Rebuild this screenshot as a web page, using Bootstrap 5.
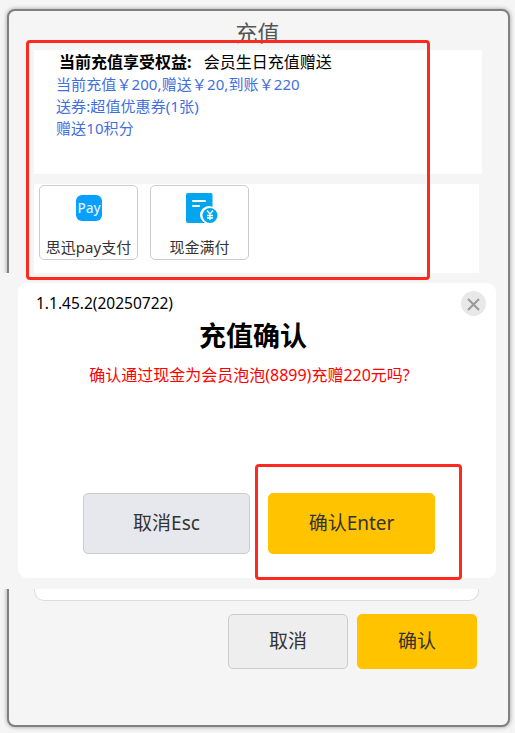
<!DOCTYPE html>
<html lang="zh-CN">
<head>
<meta charset="utf-8">
<title>充值</title>
<link href="https://cdn.jsdelivr.net/npm/bootstrap@5.3.0/dist/css/bootstrap.min.css" rel="stylesheet">
<style>
html,body{margin:0;height:733px;overflow:hidden;background:#f5f5f5;font-family:"Noto Sans","Noto Sans CJK SC",sans-serif}
.stage{position:relative;width:515px;height:733px;padding:9px 5px 6px 7px}
.win{height:718px;background:#f5f5f6;border:2px solid #808080;border-radius:8px;box-shadow:0 0 4px #999;padding:0 25px}
.win-title{font-family:"Noto Sans CJK SC",serif;font-size:22px;line-height:26px;color:#555;text-align:center;padding-top:7px;height:39px;margin-right:2px}
.benefit{height:124px;width:448px;background:#fff;padding:1px 0 0 22px}
.b-head{font-size:16px;line-height:22px;color:#000;margin-left:3px}
.b-head strong{margin-right:8px}
.b-line{font-size:15px;line-height:22px;color:#3f6fe0;letter-spacing:.1px}
.pay-top{margin-top:10px;width:445px;height:89px;background:#fff;padding:1px 0 0 5px}
.pay-rest{width:445px;height:328px;background:#fff;border:1px solid #ddd;border-top:0;border-radius:0 0 10px 10px}
.pay-item{width:99px;height:75px;border:1px solid #ccc;border-radius:5px;background:#fff;color:#333;font-size:15px;line-height:20px;padding:0}
.pay-ico{height:44px}
.pay-name{margin-top:7px;padding-bottom:2px;white-space:nowrap}
.foot-btn{width:120px;height:55px;border-radius:5px;font-size:19px;color:#333;padding:0}
.btn-off{background:#eeeeee;border:1px solid #ccc}
.btn-on{background:#ffc300;border:1px solid #ffc300}
.foot-row{margin-top:13px;width:443px;gap:9px}
.veil{position:absolute;left:0;top:273px;width:507px;height:316px;background:#f5f5f6;padding:10px 11px 10px 18px}
.dlg{position:relative;width:478px;height:295px;background:#fff;border-radius:9px;padding:10px 0 0 18px}
.ver{font-size:15.5px;line-height:20px;color:#000}
.dlg-title{font-size:27px;line-height:34px;font-weight:700;color:#000;text-align:center;margin:6px 0 0 -18px;width:470px}
.dlg-msg{font-size:16px;line-height:22px;color:#f00;text-align:center;margin:11px 0 0 -18px;width:463px}
.x-btn{position:absolute;right:10px;top:8px;width:25px;height:25px;border-radius:50%;background:#e8e8e8;border:0;padding:0}
.dlg-btns{position:absolute;left:65px;top:210px}
.dlg-btn{width:167px;height:61px;border-radius:5px;font-size:19px;color:#333;padding:0}
.dlg-cancel{background:#e6e8ed;border:1px solid #ccc}
.dlg-gap{gap:18px}
.mark-a,.mark-b{position:absolute;border:3px solid #ff2a1f;border-radius:4px}
.mark-a{left:26px;top:40px;width:404px;height:240px}
.mark-b{left:255px;top:464px;width:207px;height:116px}
</style>
</head>
<body>
<div class="stage">
  <div class="win">
    <div class="win-title">充值</div>
    <div class="benefit">
      <div class="b-head"><strong>当前充值享受权益:</strong> 会员生日充值赠送</div>
      <div class="b-line">当前充值￥200,赠送￥20,到账￥220</div>
      <div class="b-line">送券:超值优惠券(1张)</div>
      <div class="b-line">赠送10积分</div>
    </div>
    <div class="pay-top">
      <div class="d-flex gap-2">
        <button type="button" class="pay-item btn me-1">
          <div class="pay-ico d-flex align-items-center justify-content-center">
            <svg width="26" height="26" viewBox="0 0 26 26"><rect width="26" height="26" rx="6" fill="#089fff"/><text x="13" y="17.500" text-anchor="middle" font-size="13.500" font-family="Noto Sans" font-weight="500" fill="#dff2ff">Pay</text></svg>
          </div>
          <div class="pay-name">思迅pay支付</div>
        </button>
        <button type="button" class="pay-item btn">
          <div class="pay-ico d-flex align-items-center justify-content-center">
            <svg class="ms-1" width="32" height="31" viewBox="0 0 32 31"><path d="M2 0h23a1.500 1.500 0 0 1 1.500 1.500V30H2a2 2 0 0 1-2-2V2a2 2 0 0 1 2-2z" fill="#03a5ee"/><rect x="6" y="7" width="14" height="2" rx="1" fill="#fff"/><rect x="6" y="12" width="8" height="2" rx="1" fill="#fff"/><circle cx="23" cy="22" r="9" fill="#fff"/><circle cx="24" cy="22.500" r="7.500" fill="#03a5ee"/><path d="M21 17.500l3 3.500 3-3.500M24 21v6M21 22.500h6M21 25h6" stroke="#fff" stroke-width="1.300" fill="none"/></svg>
          </div>
          <div class="pay-name">现金满付</div>
        </button>
      </div>
    </div>
    <div class="pay-rest"></div>
    <div class="foot-row d-flex justify-content-end">
      <button type="button" class="foot-btn btn-off btn">取消</button>
      <button type="button" class="foot-btn btn-on btn">确认</button>
    </div>
  </div>

  <div class="veil">
    <div class="dlg">
      <div class="ver">1.1.45.2(20250722)</div>
      <div class="dlg-title">充值确认</div>
      <div class="dlg-msg">确认通过现金为会员泡泡(8899)充赠220元吗?</div>
      <button type="button" class="x-btn" aria-label="关闭">
        <svg width="25" height="25" viewBox="0 0 25 25"><path d="M7 7l11 11M18 7L7 18" stroke="#999" stroke-width="2" fill="none"/></svg>
      </button>
      <div class="dlg-btns d-flex dlg-gap">
        <button type="button" class="dlg-btn dlg-cancel btn">取消Esc</button>
        <button type="button" class="dlg-btn btn-on btn">确认Enter</button>
      </div>
    </div>
  </div>

  <div class="mark-a"></div>
  <div class="mark-b"></div>
</div>
<script src="https://cdn.jsdelivr.net/npm/bootstrap@5.3.0/dist/js/bootstrap.bundle.min.js"></script>
</body>
</html>
